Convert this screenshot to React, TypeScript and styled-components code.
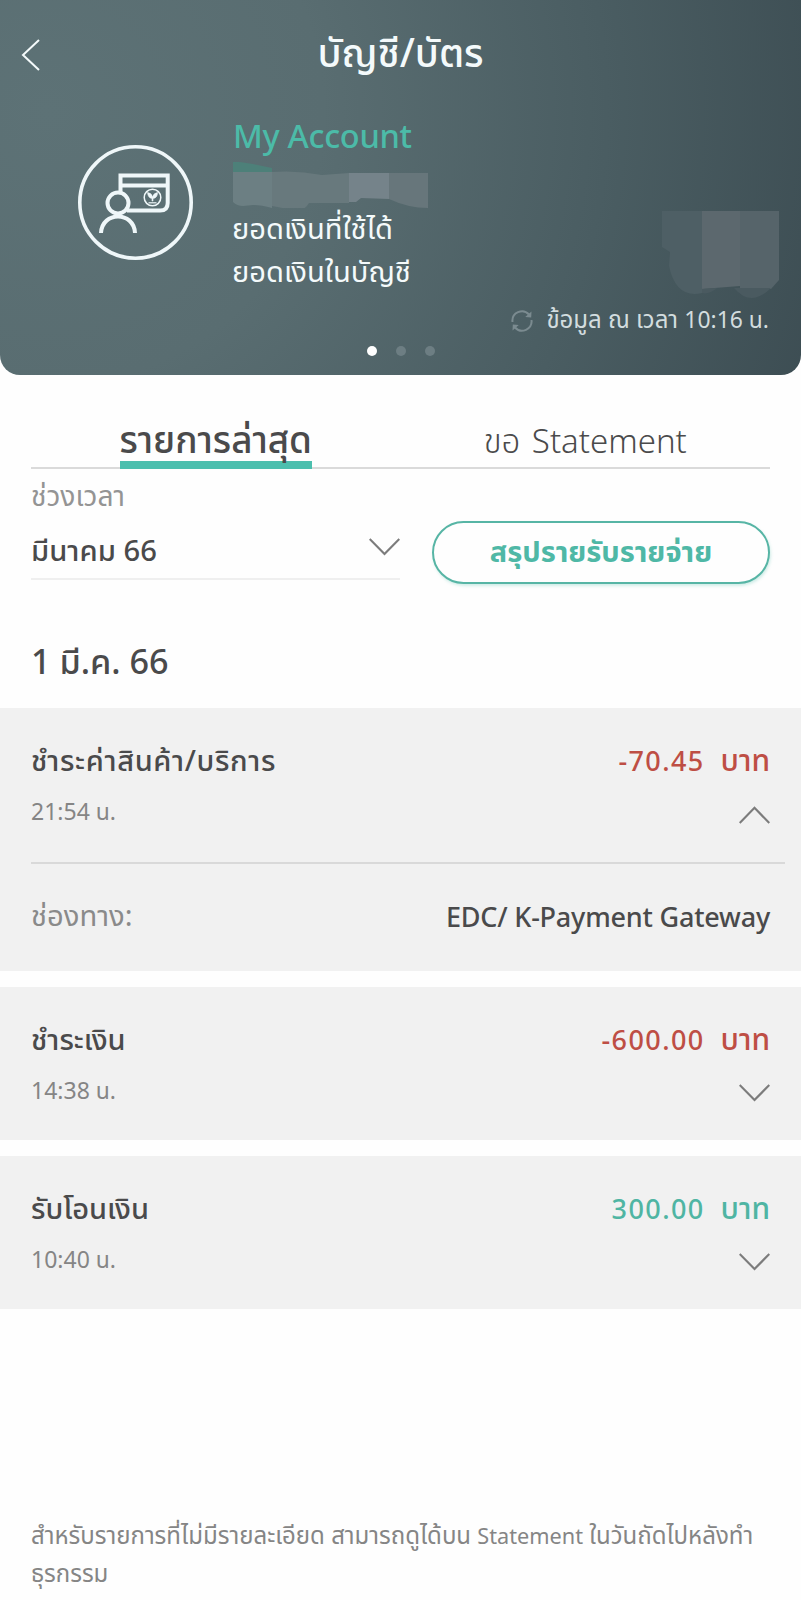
import React from 'react';
import styled, { createGlobalStyle } from 'styled-components';

const GlobalStyle = createGlobalStyle`
  * { box-sizing: border-box; }
  body {
    margin: 0;
    background: #fefefe;
    color: #4a4a4b;
    font-family: 'Noto Sans', 'Noto Sans Thai', 'Noto Sans Thai Looped', sans-serif;
  }
`;

const Screen = styled.main`
  width: 801px;
  height: 1600px;
  display: flex;
  flex-direction: column;
  overflow: hidden;
`;

const Header = styled.header`
  flex: none;
  height: 375px;
  border-radius: 0 0 20px 20px;
  display: flex;
  flex-direction: column;
  background: radial-gradient(ellipse 860px 850px at 6% 30%, #5d7276 0%, #596d71 32%, #4a5d62 65%, #3a4a50 100%);
  color: #f4fafb;
`;

const TopBar = styled.div`
  height: 110px;
  display: grid;
  grid-template-columns: 60px 1fr 60px;
  align-items: center;
`;

const BackButton = styled.button`
  padding: 0 0 0 21px;
  border: 0;
  background: none;
  color: inherit;
  display: flex;
`;

const Title = styled.h1`
  margin: 0;
  padding-bottom: 6px;
  text-align: center;
  font-size: 39.3px;
  line-height: 60px;
  font-weight: 500;
`;

const Account = styled.section`
  height: 187px;
  display: grid;
  grid-template-columns: 233px 1fr 139px;
`;

const AvatarCell = styled.div`
  padding: 34px 0 0 77px;
`;

const AccountInfo = styled.div`
  display: flex;
  flex-direction: column;
`;

const AccountName = styled.div`
  height: 52px;
  line-height: 52px;
  font-size: 32.5px;
  letter-spacing: -0.3px;
  font-weight: 500;
  color: #4cbba8;
`;

const MaskedNumber = styled.svg`
  display: block;
  height: 46px;
  width: 200px;
`;

const Balance = styled.div`
  height: 43px;
  margin-left: -1px;
  line-height: 41px;
  font-size: 29.1px;
  white-space: nowrap;
`;

const MaskedAmounts = styled.svg`
  display: block;
  margin-top: 98px;
`;

const Updated = styled.div`
  height: 44px;
  padding: 3px 32px 0 0;
  display: flex;
  align-items: center;
  justify-content: flex-end;
  gap: 13px;
  font-size: 24px;
  color: #d3dddf;
`;

const Numerals = styled.span`
  font-size: 22.9px;
`;

const Pager = styled.div`
  height: 20px;
  display: flex;
  align-items: center;
  justify-content: center;
  gap: 19px;
`;

const Dot = styled.span<{ $active?: boolean }>`
  width: 10px;
  height: 10px;
  border-radius: 50%;
  background: ${p => (p.$active ? '#ffffff' : '#6d7e83')};
`;

const Tabs = styled.nav`
  height: 94px;
  margin: 0 31px;
  border-bottom: 2px solid #dadada;
  display: grid;
  grid-template-columns: 1fr 1fr;
  justify-items: center;
  align-items: end;
`;

const Tab = styled.button<{ $active?: boolean }>`
  height: 55px;
  margin-bottom: -2px;
  padding: ${p => (p.$active ? '2px 0 0' : '3px 0 0')};
  border: 0;
  border-bottom: 8px solid ${p => (p.$active ? '#4cbfae' : 'transparent')};
  background: none;
  color: #4a4a4b;
  font-family: inherit;
  font-size: ${p => (p.$active ? '36.8px' : '33px')};
  line-height: 47px;
  font-weight: ${p => (p.$active ? 500 : 300)};
  word-spacing: 3px;
  white-space: nowrap;
`;

const Filters = styled.section`
  height: 152px;
  margin: 0 31px;
  display: grid;
  grid-template-columns: 369px 338px;
  justify-content: space-between;
`;

const Period = styled.div`
  height: 111px;
  border-bottom: 2px solid #efefef;
`;

const PeriodLabel = styled.div`
  height: 52px;
  line-height: 52px;
  font-size: 28.2px;
  font-weight: 400;
  color: #949494;
`;

const PeriodValue = styled.div`
  height: 57px;
  display: flex;
  justify-content: space-between;
  align-items: flex-start;
  font-size: 29.2px;
  line-height: 59px;
  font-weight: 500;

  svg {
    margin-top: 17px;
  }
`;

const SummaryButton = styled.button`
  height: 63px;
  margin-top: 52px;
  border: 2px solid #57b5a5;
  border-radius: 32px;
  background: #fefefe;
  box-shadow: 1px 2px 3px rgba(76, 187, 168, 0.25);
  color: #4fb8a6;
  font-family: inherit;
  font-size: 29px;
  font-weight: 700;
`;

const DateHeading = styled.h2`
  height: 87px;
  margin: 0 31px;
  line-height: 80px;
  font-size: 34.2px;
  font-weight: 500;
`;

const List = styled.div`
  display: flex;
  flex-direction: column;
  gap: 16px;
`;

const Entry = styled.article`
  background: #f1f1f1;
`;

const Summary = styled.div`
  height: 153px;
  padding: 28px 31px 0;
`;

const EntryRow = styled.div`
  height: 51px;
  display: flex;
  justify-content: space-between;
  align-items: center;
`;

const EntryName = styled.span<{ $wide?: boolean }>`
  font-size: 29px;
  letter-spacing: ${p => (p.$wide ? '0.65px' : '0')};
  font-weight: 500;
`;

const Amount = styled.span<{ $positive?: boolean }>`
  display: flex;
  align-items: baseline;
  gap: 16px;
  font-size: 30px;
  font-weight: 500;
  color: ${p => (p.$positive ? '#4fb5a3' : '#be4e44')};
`;

const Figure = styled.span`
  font-size: 27px;
  letter-spacing: 1.4px;
`;

const Time = styled.span`
  font-size: 23px;
  color: #858585;
`;

const Toggle = styled.span<{ $open?: boolean }>`
  display: flex;
  padding-top: ${p => (p.$open ? '5px' : '3px')};
`;

const Detail = styled.div`
  height: 110px;
  padding: 1px 16px 0 31px;
`;

const DetailBody = styled.div`
  height: 109px;
  padding: 0 15px 2px 0;
  border-top: 2px solid #d9d9d9;
  display: flex;
  justify-content: space-between;
  align-items: center;
  font-size: 27px;
`;

const DetailLabel = styled.span`
  color: #8a8a8a;
  font-size: 29.2px;
  font-weight: 400;
`;

const DetailValue = styled.span`
  font-weight: 500;
  letter-spacing: -0.2px;
`;

const Note = styled.p`
  margin: 207px 31px 0;
  font-size: 24px;
  line-height: 37.5px;
  color: #858585;
`;

const NoteLine = styled.span`
  display: block;
  height: 37.5px;
  white-space: nowrap;
`;

const Latin = styled.span`
  font-size: 21.7px;
`;

const Chevron = ({ up }: { up?: boolean }) => (
  <svg width="31" height="18" viewBox="0 0 31 18" fill="none" stroke="#7c7c7c" strokeWidth="2.2">
    <path d={up ? 'M.7 17 15.5 1.8 30.3 17' : 'M.7 1 15.5 16 30.3 1'} />
  </svg>
);

const AccountIcon = () => (
  <svg width="117" height="117" viewBox="0 0 117 117" fill="none" stroke="#eff7f9" strokeWidth="4">
    <circle cx="58.5" cy="58.5" r="55.7" strokeWidth="3.6" />
    <path d="M43.5 48V31.5h47.2V59q0 7.500-7.500 7.500H50M43.500 41.500h47" />
    <circle cx="41" cy="59" r="10.500" />
    <path d="M24 89c1-22 33-22 34 0" />
    <circle cx="75.500" cy="53.500" r="8.300" strokeWidth="1.500" />
    <path d="M75 57v-2.500Q71 54 70.500 48.500q4.500.5 5 4.500 1-4 5-4.500Q80.500 54 76 54.500V57Z" fill="#eff7f9" strokeWidth=".6" />
    <path d="M71.500 58.800h8" strokeWidth="1.200" />
  </svg>
);

const RefreshIcon = () => (
  <svg width="22" height="22" viewBox="0 0 22 22" fill="none" stroke="#7b8b90" strokeWidth="2">
    <path d="M1.5 12A9.500 9.500 0 0 1 18 4.500M20.500 10A9.500 9.500 0 0 1 4 17.500" />
    <path d="m20.500 1.500-.3 6-6-.5ZM1.500 20.500l.3-6 6 .5Z" fill="#7b8b90" stroke="none" />
  </svg>
);

type EntryData = {
  name: string;
  time: string;
  amount: string;
  positive?: boolean;
  channel?: string;
};

const entries: EntryData[] = [
  { name: 'ชำระค่าสินค้า/บริการ', time: '21:54 น.', amount: '-70.45', channel: 'EDC/ K-Payment Gateway' },
  { name: 'ชำระเงิน', time: '14:38 น.', amount: '-600.00' },
  { name: 'รับโอนเงิน', time: '10:40 น.', amount: '300.00', positive: true },
];

export default function App() {
  return (
    <Screen>
      <GlobalStyle />
      <Header>
        <TopBar>
          <BackButton aria-label="ย้อนกลับ">
            <svg width="20" height="32" viewBox="0 0 20 32" fill="none" stroke="currentColor" strokeWidth="2">
              <path d="M18 1 2 16l16 15" />
            </svg>
          </BackButton>
          <Title>บัญชี/บัตร</Title>
        </TopBar>
        <Account>
          <AvatarCell>
            <AccountIcon />
          </AvatarCell>
          <AccountInfo>
            <AccountName>My Account</AccountName>
            <MaskedNumber viewBox="0 0 200 46">
              <path d="M0-1 20 2 39 6v4H0Z" fill="#4d8079" />
              <path d="M0 10h39v36Q28 43 20 43L10 44Q4 44 0 40Z" fill="#6c7f83" />
              <path d="M39 10q25-2 50 3l27-2v30H76q-6 10-16 7l-21-4Z" fill="#68797d" />
              <path d="M116 11h40v26l-28-1-5 4h-7Z" fill="#75838a" />
              <path d="M156 11h39v35q-20 0-39-9Z" fill="#67767b" />
            </MaskedNumber>
            <Balance>ยอดเงินที่ใช้ได้</Balance>
            <Balance>ยอดเงินในบัญชี</Balance>
          </AccountInfo>
          <MaskedAmounts width="118" height="90" viewBox="0 0 118 90">
            <path d="M0 3h40v82q-26 6-33-27l1-14-8-5Z" fill="#4e5f65" />
            <path d="M40 3h38v75l-38 3Z" fill="#5c686e" />
            <path d="M78 3h39v69l-8 9H78Z" fill="#56646a" />
            <path d="M40 81l15-1q-8 7-15 5ZM72 80h37q-20 20-37 0Z" fill="#4a5a60" />
          </MaskedAmounts>
        </Account>
        <Updated>
          <RefreshIcon />
          <span>ข้อมูล ณ เวลา <Numerals>10:16 น.</Numerals></span>
        </Updated>
        <Pager>
          <Dot $active />
          <Dot />
          <Dot />
        </Pager>
      </Header>

      <Tabs>
        <Tab $active>รายการล่าสุด</Tab>
        <Tab>ขอ Statement</Tab>
      </Tabs>

      <Filters>
        <Period>
          <PeriodLabel>ช่วงเวลา</PeriodLabel>
          <PeriodValue>
            <span>มีนาคม 66</span>
            <Chevron />
          </PeriodValue>
        </Period>
        <SummaryButton>สรุปรายรับรายจ่าย</SummaryButton>
      </Filters>

      <DateHeading>1 มี.ค. 66</DateHeading>

      <List>
        {entries.map(e => (
          <Entry key={e.time}>
            <Summary>
              <EntryRow>
                <EntryName $wide={e.name.length > 12}>{e.name}</EntryName>
                <Amount $positive={e.positive}>
                  <Figure>{e.amount}</Figure>
                  <span>บาท</span>
                </Amount>
              </EntryRow>
              <EntryRow>
                <Time>{e.time}</Time>
                <Toggle $open={!!e.channel}>
                  <Chevron up={!!e.channel} />
                </Toggle>
              </EntryRow>
            </Summary>
            {e.channel && (
              <Detail>
                <DetailBody>
                  <DetailLabel>ช่องทาง:</DetailLabel>
                  <DetailValue>{e.channel}</DetailValue>
                </DetailBody>
              </Detail>
            )}
          </Entry>
        ))}
      </List>

      <Note>
        <NoteLine>
          สำหรับรายการที่ไม่มีรายละเอียด สามารถดูได้บน <Latin>Statement</Latin> ในวันถัดไปหลังทำ
        </NoteLine>
        <NoteLine>ธุรกรรม</NoteLine>
      </Note>
    </Screen>
  );
}
